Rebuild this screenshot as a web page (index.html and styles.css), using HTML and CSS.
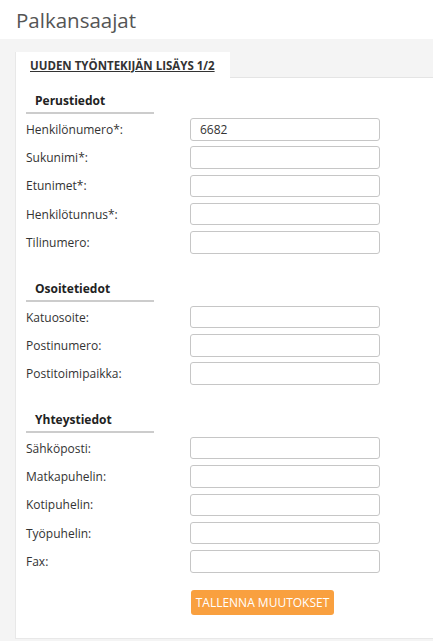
FILE: index.html
```html
<!DOCTYPE html>
<html lang="fi">
<head>
    <meta charset="UTF-8">
    <meta name="viewport" content="width=device-width, initial-scale=1.0">
    <title>Palkansaajat</title>
    <link rel="stylesheet" href="styles.css">
</head>
<body>
    <header class="page-header">
        <h1>Palkansaajat</h1>
    </header>
    <main class="content">
        <div class="tabs">
            <div class="tab active">UUDEN TYÖNTEKIJÄN LISÄYS 1/2</div>
            <div class="tab-fill"></div>
        </div>
        <form class="panel">
            <section class="group">
                <h3>Perustiedot</h3>
                <div class="fields">
                    <label class="field"><span>Henkilönumero*:</span><input type="text" value="6682"></label>
                    <label class="field"><span>Sukunimi*:</span><input type="text"></label>
                    <label class="field"><span>Etunimet*:</span><input type="text"></label>
                    <label class="field"><span>Henkilötunnus*:</span><input type="text"></label>
                    <label class="field"><span>Tilinumero:</span><input type="text"></label>
                </div>
            </section>
            <section class="group">
                <h3>Osoitetiedot</h3>
                <div class="fields">
                    <label class="field"><span>Katuosoite:</span><input type="text"></label>
                    <label class="field"><span>Postinumero:</span><input type="text"></label>
                    <label class="field"><span>Postitoimipaikka:</span><input type="text"></label>
                </div>
            </section>
            <section class="group">
                <h3>Yhteystiedot</h3>
                <div class="fields">
                    <label class="field"><span>Sähköposti:</span><input type="text"></label>
                    <label class="field"><span>Matkapuhelin:</span><input type="text"></label>
                    <label class="field"><span>Kotipuhelin:</span><input type="text"></label>
                    <label class="field"><span>Työpuhelin:</span><input type="text"></label>
                    <label class="field"><span>Fax:</span><input type="text"></label>
                </div>
            </section>
            <div class="actions">
                <button type="button" class="save-btn">TALLENNA MUUTOKSET</button>
            </div>
        </form>
    </main>
</body>
</html>
```

FILE: styles.css
```css
/* General */
body {
    margin: 0;
    font-family: "Open Sans", "Liberation Sans", sans-serif;
    color: #333;
    background: #fff;
}

.page-header {
    height: 39px;
    padding-left: 16px;
    display: flex;
    align-items: center;
}

.page-header h1 {
    margin: 0;
    font-size: 20.5px;
    font-weight: normal;
    color: #555;
}

.content {
    background-color: #f4f4f4;
    margin-right: 1px;
    padding: 13px 0 3px 15px;
}

/* Tabs */
.tabs {
    display: flex;
}

.tab {
    background: #fff;
    height: 26px;
    padding: 0 15px 0 14px;
    display: flex;
    align-items: center;
    font-size: 11.5px;
    font-weight: bold;
    text-decoration: underline;
    border-left: 1px solid #e8e8e8;
}

.tab-fill {
    flex: 1;
    border-bottom: 1px solid #e4e4e4;
}

/* Form panel */
.panel {
    background: #fff;
    border-left: 1px solid #e8e8e8;
    border-bottom: 1px solid #e8e8e8;
    padding: 14px 10px 23px 10px;
}

.group + .group {
    margin-top: 26px;
}

.group h3 {
    margin: 0;
    width: 119px;
    padding: 0 0 2px 9px;
    font-size: 12px;
    line-height: 18px;
    font-weight: bold;
    color: #222;
    border-bottom: 2px solid #ccc;
}

.fields {
    display: flex;
    flex-direction: column;
    gap: 5.83px;
    margin-top: 4px;
}

.field {
    display: grid;
    grid-template-columns: 164px 190px;
    align-items: center;
    font-size: 12px;
}

.field input {
    box-sizing: border-box;
    height: 22.5px;
    margin: 0;
    border: 1px solid #c6c6c6;
    border-radius: 3px;
    padding: 0 9px;
    font-family: inherit;
    font-size: 12px;
    color: #333;
}

.actions {
    padding: 17px 0 0 165px;
}

.save-btn {
    height: 25px;
    width: 143px;
    border: none;
    border-radius: 3px;
    background-color: #f9a03f;
    color: #fff;
    font-family: inherit;
    font-size: 12px;
    padding: 0;
}
```
